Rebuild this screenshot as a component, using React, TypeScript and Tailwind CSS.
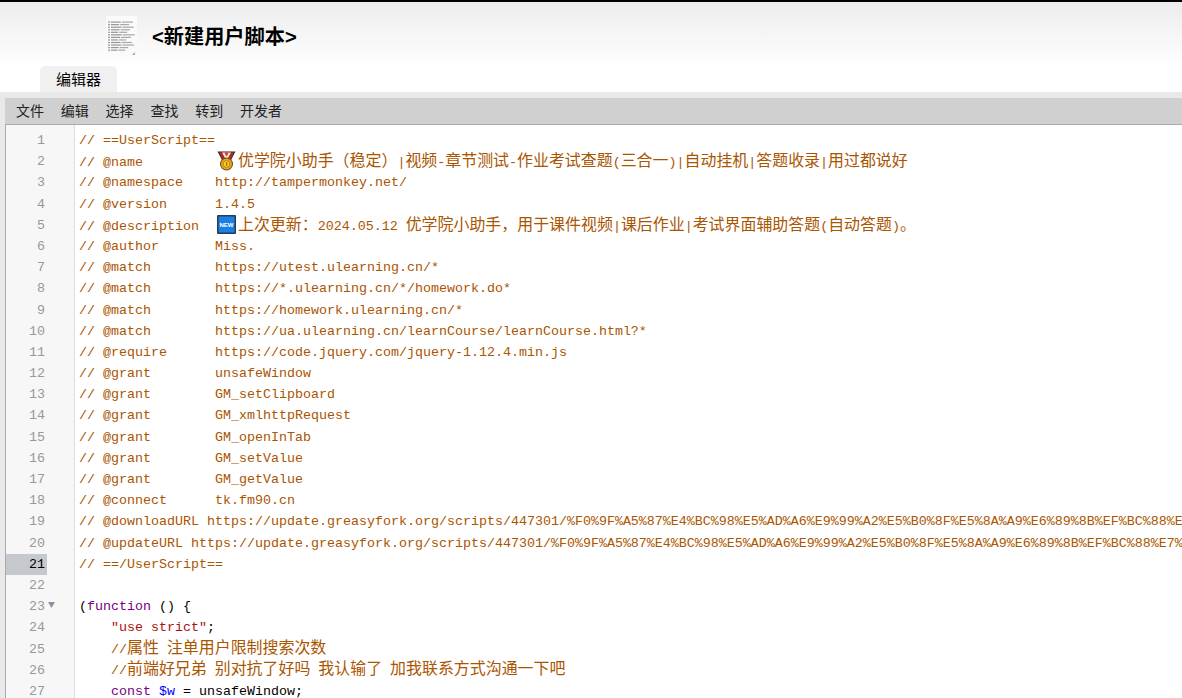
import React from "react";

const CJK = /([\u3000-\u9fff\uff00-\uffef]+)/;

function T({ children, className = "" }: { children: string; className?: string }) {
  const parts = children.split(CJK);
  return (
    <span className={className}>
      {parts.map((p, i) =>
        CJK.test(p) ? (
          <span key={i} className="text-[15.95px] leading-none [font-family:'Noto_Sans_CJK_SC','Liberation_Mono',monospace]">
            {p}
          </span>
        ) : (
          <React.Fragment key={i}>{p}</React.Fragment>
        )
      )}
    </span>
  );
}

function Medal() {
  return (
    <svg width="19" height="20" viewBox="0 0 19 20" className="inline-block align-[-5px] mr-[2px] ml-[2px]">
      <path d="M0.5 0.5h18l-5 9.5h-8z" fill="#3a2a28" />
      <path d="M2 1.5h15l-3.5 7h-8z" fill="#b52a20" />
      <path d="M5 1.5h9l-3 5.5H8z" fill="#f0ece6" />
      <path d="M7.5 1.5h4L10 5H9z" fill="#d83a2a" />
      <circle cx="9.5" cy="13" r="6.5" fill="#6b4a10" />
      <circle cx="9.5" cy="13" r="5.5" fill="#e6a51a" />
      <circle cx="9.5" cy="13" r="3.4" fill="#f7c92e" stroke="#b57a0a" strokeWidth="0.8" />
      <rect x="9" y="11" width="1.2" height="4" fill="#a86f08" />
    </svg>
  );
}

function NewIcon() {
  return (
    <svg width="19" height="19" viewBox="0 0 19 19" className="inline-block align-[-4px] mr-[2px] ml-[2px]">
      <rect x="0" y="0" width="19" height="19" rx="1" fill="#2b3a4c" />
      <rect x="1.5" y="1.5" width="16" height="16" fill="#1a80e6" />
      <text x="9.5" y="12" textAnchor="middle" fontSize="6" fontWeight="700" fill="#fff" fontFamily="Liberation Sans, sans-serif">NEW</text>
    </svg>
  );
}

function Thumb() {
  const widths = [22, 18, 23, 19, 16, 24, 20, 15, 21, 23, 17, 14];
  return (
    <svg width="31" height="41" viewBox="0 0 31 41" className="mr-[15px] shrink-0">
      <defs>
        <filter id="b"><feGaussianBlur stdDeviation="0.4" /></filter>
      </defs>
      <rect width="31" height="41" fill="#fafafa" />
      <g opacity="0.55" filter="url(#b)">
        {widths.map((w, i) => (
          <g key={i}>
            <rect x="2" y={5.5 + i * 2.55} width="2" height="1.2" fill="#444" />
            <rect x="5" y={5.5 + i * 2.55} width={w * 0.45} height="1.2" fill="#444" />
            <rect x={6 + w * 0.45} y={5.5 + i * 2.55} width={w * 0.5} height="1.2" fill="#666" />
          </g>
        ))}
      </g>
      <path d="M26 39l3-3v3z" fill="#aaa" />
    </svg>
  );
}

const c = "text-[#aa5500]";

const lines: React.ReactNode[] = [
  <T className={c}>{"// ==UserScript=="}</T>,
  <span className={c}>
    <T>{"// @name         "}</T>
    <Medal />
    <T>优学院小助手（稳定）|视频-章节测试-作业考试查题(三合一)|自动挂机|答题收录|用过都说好</T>
  </span>,
  <T className={c}>{"// @namespace    http://tampermonkey.net/"}</T>,
  <T className={c}>{"// @version      1.4.5"}</T>,
  <span className={c}>
    <T>{"// @description  "}</T>
    <NewIcon />
    <T>上次更新：2024.05.12 优学院小助手，用于课件视频|课后作业|考试界面辅助答题(自动答题)。</T>
  </span>,
  <T className={c}>{"// @author       Miss."}</T>,
  <T className={c}>{"// @match        https://utest.ulearning.cn/*"}</T>,
  <T className={c}>{"// @match        https://*.ulearning.cn/*/homework.do*"}</T>,
  <T className={c}>{"// @match        https://homework.ulearning.cn/*"}</T>,
  <T className={c}>{"// @match        https://ua.ulearning.cn/learnCourse/learnCourse.html?*"}</T>,
  <T className={c}>{"// @require      https://code.jquery.com/jquery-1.12.4.min.js"}</T>,
  <T className={c}>{"// @grant        unsafeWindow"}</T>,
  <T className={c}>{"// @grant        GM_setClipboard"}</T>,
  <T className={c}>{"// @grant        GM_xmlhttpRequest"}</T>,
  <T className={c}>{"// @grant        GM_openInTab"}</T>,
  <T className={c}>{"// @grant        GM_setValue"}</T>,
  <T className={c}>{"// @grant        GM_getValue"}</T>,
  <T className={c}>{"// @connect      tk.fm90.cn"}</T>,
  <T className={c}>{"// @downloadURL https://update.greasyfork.org/scripts/447301/%F0%9F%A5%87%E4%BC%98%E5%AD%A6%E9%99%A2%E5%B0%8F%E5%8A%A9%E6%89%8B%EF%BC%88%E"}</T>,
  <T className={c}>{"// @updateURL https://update.greasyfork.org/scripts/447301/%F0%9F%A5%87%E4%BC%98%E5%AD%A6%E9%99%A2%E5%B0%8F%E5%8A%A9%E6%89%8B%EF%BC%88%E7%"}</T>,
  <T className={c}>{"// ==/UserScript=="}</T>,
  <span>&nbsp;</span>,
  <span>
    (<span className="text-[#770088]">function</span> () {"{"}
  </span>,
  <span>
    {"    "}
    <span className="text-[#aa1111]">"use strict"</span>;
  </span>,
  <T className={c}>{"    //属性 注单用户限制搜索次数"}</T>,
  <T className={c}>{"    //前端好兄弟 别对抗了好吗 我认输了 加我联系方式沟通一下吧"}</T>,
  <span>
    {"    "}
    <span className="text-[#770088]">const</span> <span className="text-[#0000ff]">$w</span> = unsafeWindow;
  </span>,
];

const menu = ["文件", "编辑", "选择", "查找", "转到", "开发者"];

export default function App() {
  return (
    <div className="h-[698px] w-[1182px] overflow-hidden flex flex-col bg-white [font-family:'Liberation_Sans','Noto_Sans_CJK_SC',sans-serif] text-black">
      <div className="h-[2px] bg-black shrink-0" />
      <header className="h-[64px] shrink-0 flex items-center pl-[106px] pt-[5px] bg-gradient-to-b from-[#ececec] to-white">
        <Thumb />
        <h1 className="text-[20.2px] font-bold leading-none mt-[1px]">&lt;新建用户脚本&gt;</h1>
      </header>
      <nav className="h-[26px] shrink-0 pl-[40px] bg-white">
        <div className="h-[26px] w-[77px] rounded-t-[5px] bg-[#f0f0f0] flex items-center justify-center text-[15px] leading-none">
          编辑器
        </div>
      </nav>
      <div className="flex-1 min-h-0 bg-[#e9e9e9] pt-[6px] pl-[5px] flex flex-col">
        <div className="h-[27px] shrink-0 bg-[#d0d0d0] border-b border-[#aaaaaa] flex items-center pl-[11px] gap-[16.8px] text-[14px] leading-none text-[#222]">
          {menu.map((m) => (
            <span key={m}>{m}</span>
          ))}
        </div>
        <div className="relative flex-1 min-h-0 flex overflow-hidden bg-white pt-[5px] border-l border-[#aaaaaa] text-[13.33px] leading-[21.19px] [font-family:'Liberation_Mono',monospace]">
          <div className="relative w-[69px] shrink-0 flex flex-col border-r border-[#dddddd] bg-[#f7f7f7] -mt-[5px] pt-[5px]">
            {lines.map((_, i) => (
              <div
                key={i}
                className={
                  "h-[21.19px] w-[41px] shrink-0 pr-[2px] text-right " +
                  (i === 20 ? "bg-[#c5c8cc] text-black" : "text-[#999999]")
                }
              >
                {i + 1}
              </div>
            ))}
            <svg width="7" height="6" viewBox="0 0 7 6" className="absolute left-[42px] top-[477px]">
              <path d="M0 0h7L3.5 6z" fill="#8a94a0" />
            </svg>
          </div>
          <div className="relative flex-1 min-w-0 pl-[4px] flex flex-col whitespace-pre">
            {lines.map((l, i) => (
              <div key={i} className="h-[21.19px] shrink-0 text-black">
                {l}
              </div>
            ))}
          </div>
        </div>
      </div>
    </div>
  );
}
